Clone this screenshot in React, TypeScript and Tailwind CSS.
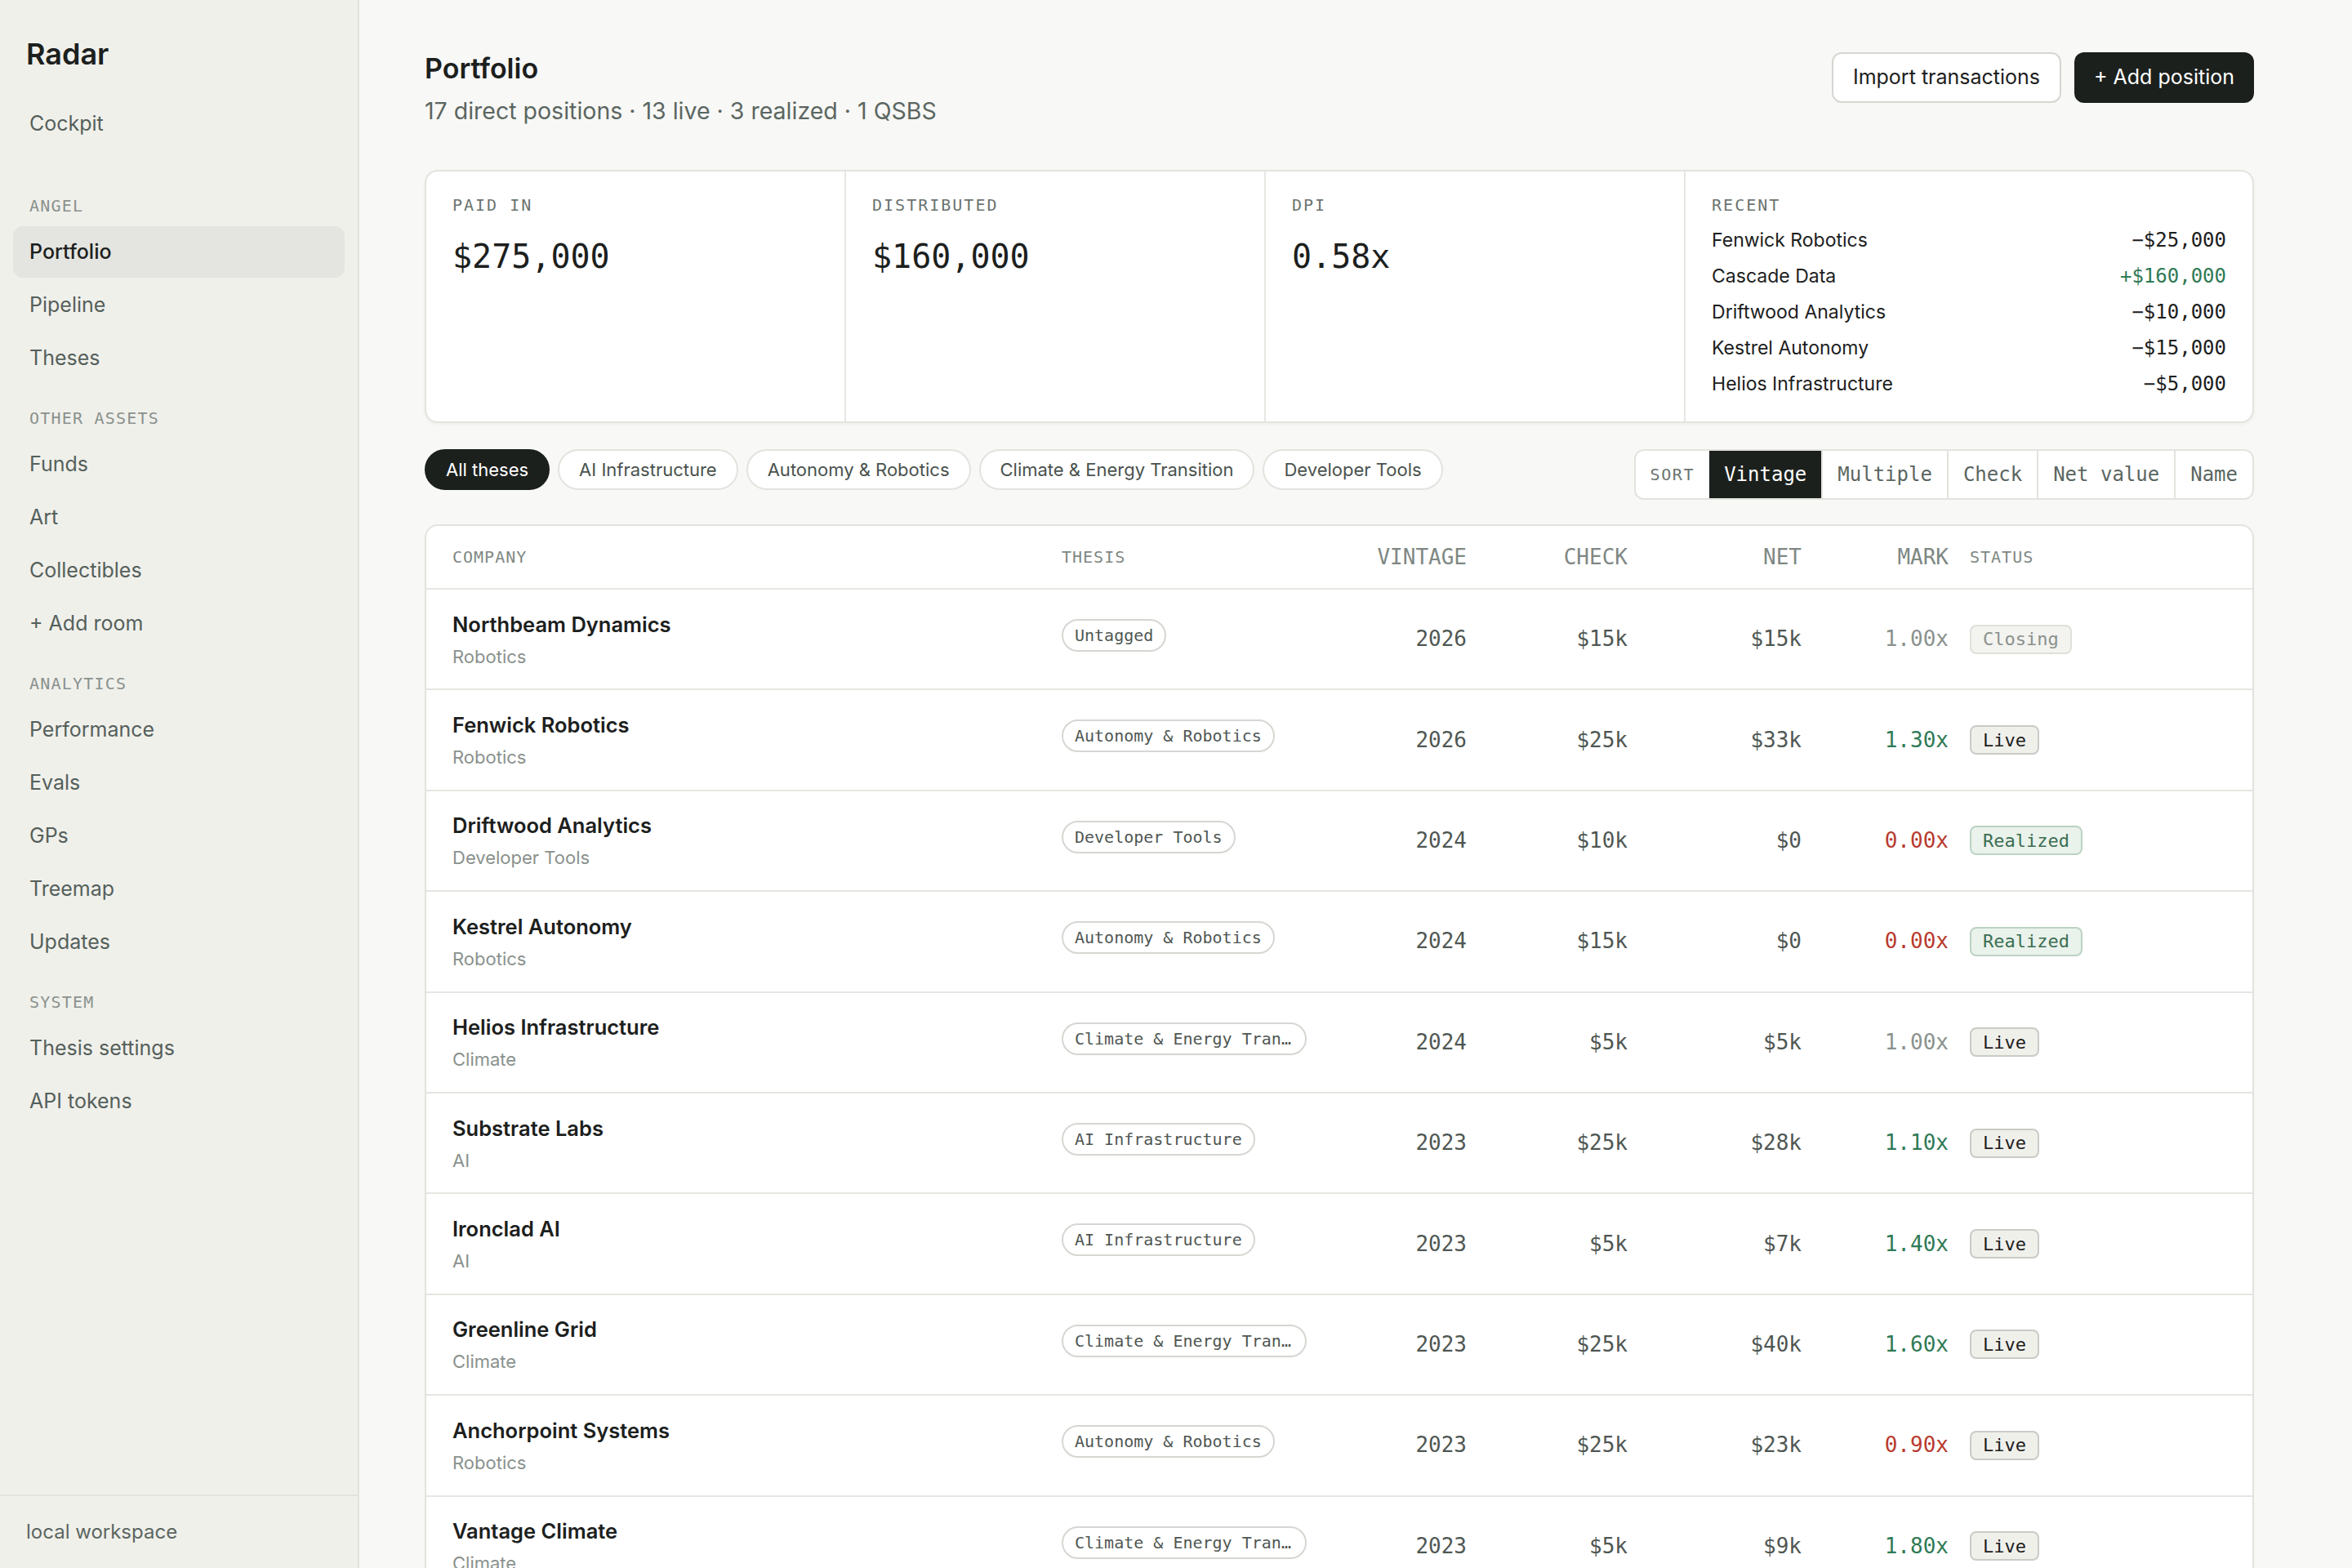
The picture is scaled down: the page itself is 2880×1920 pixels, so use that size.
import clsx from "clsx"

const SANS = "font-['Inter',sans-serif]"
const MONO = "font-['DejaVu_Sans_Mono',monospace]"

const sections = [
  { title: "ANGEL", items: ["Portfolio", "Pipeline", "Theses"] },
  { title: "OTHER ASSETS", items: ["Funds", "Art", "Collectibles", "+ Add room"] },
  { title: "ANALYTICS", items: ["Performance", "Evals", "GPs", "Treemap", "Updates"] },
  { title: "SYSTEM", items: ["Thesis settings", "API tokens"] },
]

const stats = [
  { label: "PAID IN", value: "$275,000" },
  { label: "DISTRIBUTED", value: "$160,000" },
  { label: "DPI", value: "0.58x" },
]

const recent = [
  { name: "Fenwick Robotics", amount: "−$25,000" },
  { name: "Cascade Data", amount: "+$160,000", up: true },
  { name: "Driftwood Analytics", amount: "−$10,000" },
  { name: "Kestrel Autonomy", amount: "−$15,000" },
  { name: "Helios Infrastructure", amount: "−$5,000" },
]

const theses = ["All theses", "AI Infrastructure", "Autonomy & Robotics", "Climate & Energy Transition", "Developer Tools"]
const sortOptions = ["Vintage", "Multiple", "Check", "Net value", "Name"]

type Tone = "flat" | "up" | "down"
type Status = "Live" | "Closing" | "Realized"

const positions: {
  name: string
  sector: string
  thesis: string
  vintage: string
  check: string
  net: string
  mark: string
  tone: Tone
  status: Status
}[] = [
  { name: "Northbeam Dynamics", sector: "Robotics", thesis: "Untagged", vintage: "2026", check: "$15k", net: "$15k", mark: "1.00x", tone: "flat", status: "Closing" },
  { name: "Fenwick Robotics", sector: "Robotics", thesis: "Autonomy & Robotics", vintage: "2026", check: "$25k", net: "$33k", mark: "1.30x", tone: "up", status: "Live" },
  { name: "Driftwood Analytics", sector: "Developer Tools", thesis: "Developer Tools", vintage: "2024", check: "$10k", net: "$0", mark: "0.00x", tone: "down", status: "Realized" },
  { name: "Kestrel Autonomy", sector: "Robotics", thesis: "Autonomy & Robotics", vintage: "2024", check: "$15k", net: "$0", mark: "0.00x", tone: "down", status: "Realized" },
  { name: "Helios Infrastructure", sector: "Climate", thesis: "Climate & Energy Transition", vintage: "2024", check: "$5k", net: "$5k", mark: "1.00x", tone: "flat", status: "Live" },
  { name: "Substrate Labs", sector: "AI", thesis: "AI Infrastructure", vintage: "2023", check: "$25k", net: "$28k", mark: "1.10x", tone: "up", status: "Live" },
  { name: "Ironclad AI", sector: "AI", thesis: "AI Infrastructure", vintage: "2023", check: "$5k", net: "$7k", mark: "1.40x", tone: "up", status: "Live" },
  { name: "Greenline Grid", sector: "Climate", thesis: "Climate & Energy Transition", vintage: "2023", check: "$25k", net: "$40k", mark: "1.60x", tone: "up", status: "Live" },
  { name: "Anchorpoint Systems", sector: "Robotics", thesis: "Autonomy & Robotics", vintage: "2023", check: "$25k", net: "$23k", mark: "0.90x", tone: "down", status: "Live" },
  { name: "Vantage Climate", sector: "Climate", thesis: "Climate & Energy Transition", vintage: "2023", check: "$5k", net: "$9k", mark: "1.80x", tone: "up", status: "Live" },
  { name: "Cascade Data", sector: "Data", thesis: "AI Infrastructure", vintage: "2022", check: "$10k", net: "$0", mark: "16.0x", tone: "up", status: "Realized" },
]

const COLS = "grid-cols-[373px_168px_80px_98.5px_106.5px_90px_1fr]"

function NavItem({ label, active }: { label: string; active?: boolean }) {
  return (
    <div
      className={clsx(
        "flex h-[31.5px] items-center rounded-md px-[10px] text-[12.5px]",
        active ? "bg-[#e4e5e0] font-medium text-[#1c201d]" : "text-[#55605b]",
      )}
    >
      {label}
    </div>
  )
}

function Sidebar() {
  return (
    <aside className="flex w-[220px] shrink-0 flex-col border-r border-[#e3e3de] bg-[#f0f0eb]">
      <div className="px-4 pt-[22px] text-lg leading-[22px] font-semibold">Radar</div>

      <nav className="mt-4 flex flex-1 flex-col px-2">
        <NavItem label="Cockpit" />
        {sections.map((section, i) => (
          <div key={section.title} className={clsx("flex flex-col gap-px", i === 0 ? "mt-[27px]" : "mt-[13.5px]")}>
            <div className={clsx("mb-1 px-[10px] text-[10px] leading-[15px] tracking-[0.06em] text-[#8a918d]", MONO)}>
              {section.title}
            </div>
            {section.items.map((item) => (
              <NavItem key={item} label={item} active={item === "Portfolio"} />
            ))}
          </div>
        ))}
      </nav>

      {/* Workspace footer */}
      <div className="border-t border-[#e3e3de] px-4 py-[13px] text-xs leading-[18px] text-[#5b6661]">local workspace</div>
    </aside>
  )
}

function StatusBadge({ status }: { status: Status }) {
  return (
    <span
      className={clsx(
        "inline-flex h-[18px] items-center rounded-[4px] border px-[7px] text-[11px]",
        MONO,
        status === "Live" && "border-[#c9cbc5] bg-[#f0f0eb] text-[#1c201d]",
        status === "Closing" && "border-[#e0e0db] bg-[#f3f3ef] text-[#8a918d]",
        status === "Realized" && "border-[#bcd3c3] bg-[#eaf2ec] text-[#3b6e52]",
      )}
    >
      {status}
    </span>
  )
}

export default function App() {
  return (
    <div className="[zoom:2]">
      <div className={clsx("flex h-[960px] w-[1440px] overflow-hidden bg-[#f8f8f6] text-[#1c201d]", SANS)}>
        <Sidebar />

        <main className="min-w-0 flex-1 overflow-hidden px-10 pt-8">
          <div className="max-w-[1120px]">
            {/* Header */}
            <div className="flex items-start justify-between">
              <div>
                <h1 className="text-[17px] leading-5 font-semibold">Portfolio</h1>
                <p className="mt-[6px] text-[14.25px] leading-5 text-[#5b6661]">
                  17 direct positions · 13 live · 3 realized · 1 QSBS
                </p>
              </div>
              <div className="flex gap-2">
                <button className="h-[31px] rounded-md border border-[#d6d6d2] bg-white px-3 text-[12.5px]">
                  Import transactions
                </button>
                <button className="h-[31px] rounded-md bg-[#1c201d] px-3 text-[12.5px] text-white">+ Add position</button>
              </div>
            </div>

            {/* Summary */}
            <div className="mt-[26px] grid grid-cols-[1fr_1fr_1fr_1.35fr] rounded-lg border border-[#e3e3de] bg-white shadow-[0_1px_2px_rgba(0,0,0,0.04)]">
              {stats.map((s) => (
                <div key={s.label} className="border-r border-[#e6e6e1] px-4 pt-[13px]">
                  <div className={clsx("text-[10px] leading-[15px] tracking-[0.1em] text-[#6b746f]", MONO)}>{s.label}</div>
                  <div className={clsx("mt-[10px] text-xl leading-7", MONO)}>{s.value}</div>
                </div>
              ))}
              <div className="px-4 pt-[13px] pb-[12px]">
                <div className={clsx("text-[10px] leading-[15px] tracking-[0.1em] text-[#6b746f]", MONO)}>RECENT</div>
                <div className="mt-[3px] flex flex-col">
                  {recent.map((r) => (
                    <div key={r.name} className="flex h-[22px] items-center justify-between">
                      <span className="text-[11.5px]">{r.name}</span>
                      <span className={clsx("text-xs", MONO, r.up && "text-[#2f7a55]")}>{r.amount}</span>
                    </div>
                  ))}
                </div>
              </div>
            </div>

            {/* Filters + sort */}
            <div className="mt-4 flex items-start justify-between">
              <div className="flex gap-[5px]">
                {theses.map((t, i) => (
                  <button
                    key={t}
                    className={clsx(
                      "h-[25px] rounded-full border px-3 text-[11px]",
                      i === 0 ? "border-[#1c201d] bg-[#1c201d] text-white" : "border-[#e3e3de] bg-white text-[#4a524e]",
                    )}
                  >
                    {t}
                  </button>
                ))}
              </div>
              <div className={clsx("flex h-[31px] overflow-hidden rounded-md border border-[#e3e3de] bg-white", MONO)}>
                <span className="flex items-center px-[9px] text-[10px] tracking-[0.08em] text-[#6b746f]">SORT</span>
                {sortOptions.map((o, i) => (
                  <button
                    key={o}
                    className={clsx(
                      "flex items-center px-[9px] text-xs",
                      i === 0 ? "bg-[#1c201d] text-white" : "border-l border-[#e3e3de] text-[#5b6661]",
                    )}
                  >
                    {o}
                  </button>
                ))}
              </div>
            </div>

            {/* Positions table */}
            <div className="mt-[15px] rounded-lg border border-[#e3e3de] bg-white">
              <div className={clsx("grid h-[39px] items-center border-b border-[#e6e6e1] px-4 text-[#7f8883]", COLS, MONO)}>
                <span className="text-[10px] tracking-[0.05em]">COMPANY</span>
                <span className="text-[10px] tracking-[0.05em]">THESIS</span>
                <span className="text-right text-[13px]">VINTAGE</span>
                <span className="text-right text-[13px]">CHECK</span>
                <span className="text-right text-[13px]">NET</span>
                <span className="text-right text-[13px]">MARK</span>
                <span className="pl-[13px] text-[10px] tracking-[0.05em]">STATUS</span>
              </div>

              {positions.map((p) => (
                <div key={p.name} className={clsx("grid h-[61.7px] items-center border-b border-[#e6e6e1] px-4", COLS)}>
                  <div className="pt-px">
                    <div className="text-[12.75px] leading-[18px] font-semibold">{p.name}</div>
                    <div className="mt-[2px] text-[11px] leading-[17px] text-[#8a918d]">{p.sector}</div>
                  </div>
                  <div className="self-start pt-[18px]">
                    <span
                      className={clsx(
                        "inline-block max-w-[150px] truncate rounded-full border border-[#d6d6d2] px-[7px] align-top text-[10px] leading-[18px] text-[#4f5753]",
                        MONO,
                      )}
                    >
                      {p.thesis}
                    </span>
                  </div>
                  <span className={clsx("text-right text-[13px] text-[#4f5753]", MONO)}>{p.vintage}</span>
                  <span className={clsx("text-right text-[13px] text-[#4f5753]", MONO)}>{p.check}</span>
                  <span className={clsx("text-right text-[13px] text-[#4f5753]", MONO)}>{p.net}</span>
                  <span
                    className={clsx(
                      "text-right text-[13px]",
                      MONO,
                      p.tone === "flat" && "text-[#8a918d]",
                      p.tone === "up" && "text-[#2f7a55]",
                      p.tone === "down" && "text-[#b83a2e]",
                    )}
                  >
                    {p.mark}
                  </span>
                  <div className="flex items-center pl-[13px]">
                    <StatusBadge status={p.status} />
                  </div>
                </div>
              ))}
            </div>
          </div>
        </main>
      </div>
    </div>
  )
}
